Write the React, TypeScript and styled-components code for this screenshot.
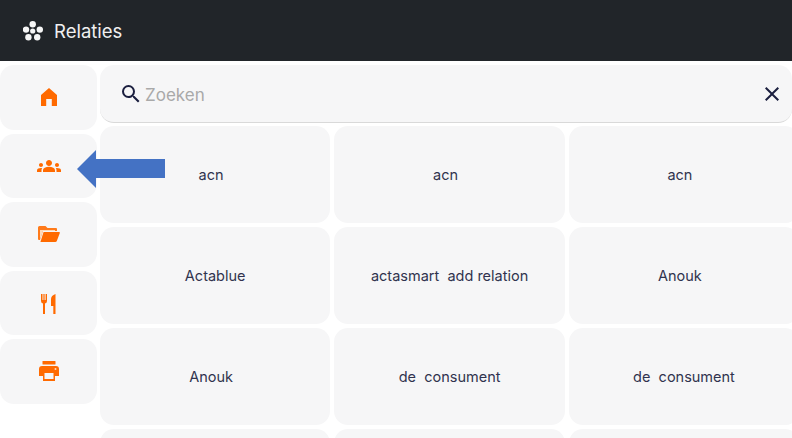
import * as React from 'react';
import styled, { createGlobalStyle } from 'styled-components';
import { MdClose, MdGroups, MdSearch } from 'react-icons/md';

const GlobalStyle = createGlobalStyle`
  html, body {
    margin: 0;
    height: 100%;
    overflow: hidden;
    background: #fff;
  }
  body {
    font-family: Inter, "Open Sans", "Liberation Sans", sans-serif;
  }
`;

const Page = styled.div`
  position: relative;
  width: 792px;
  height: 438px;
  overflow: hidden;
`;

const Header = styled.header`
  display: flex;
  align-items: center;
  gap: 11px;
  height: 61px;
  padding-left: 23px;
  background: #212529;
  color: #f0f0f0;
`;

const Title = styled.h1`
  margin: 0;
  font-size: 18.5px;
  font-weight: 400;
`;

const Body = styled.div`
  display: flex;
  gap: 3px;
  padding-top: 4px;
`;

const Sidebar = styled.nav`
  display: flex;
  flex-direction: column;
  gap: 4px;
  width: 97px;
  flex: none;
`;

const NavButton = styled.button`
  display: flex;
  align-items: center;
  justify-content: center;
  height: 64.5px;
  padding: 0;
  border: none;
  border-radius: 14px;
  background: #f6f6f7;
  color: #ff6a00;
`;

const Content = styled.main`
  display: flex;
  flex-direction: column;
  gap: 3px;
  width: 700px;
  flex: none;
`;

const SearchBar = styled.div`
  display: flex;
  align-items: center;
  height: 58px;
  width: 692px;
  padding: 0 8px 0 19px;
  box-sizing: border-box;
  border-bottom: 1px solid #d9d9d9;
  border-radius: 14px;
  background: #f6f6f7;
  color: #1b1f3f;
`;

const SearchText = styled.span`
  flex: 1;
  margin-left: 2px;
  padding-top: 3px;
  color: #a9a9a9;
  font-size: 17px;
`;

const Grid = styled.div`
  display: grid;
  grid-template-columns: repeat(3, 230.4px);
  grid-auto-rows: 97px;
  gap: 4px;
`;

const Tile = styled.div`
  display: flex;
  align-items: center;
  justify-content: center;
  border-radius: 14px;
  background: #f6f6f7;
  color: #30334e;
  font-size: 14.5px;
  white-space: pre;
`;

const Arrow = styled.svg`
  position: absolute;
  left: 77px;
  top: 150px;
`;

const tiles = [
  'acn  ',
  'acn  ',
  'acn  ',
  'Actablue',
  'actasmart  add relation',
  'Anouk  ',
  'Anouk  ',
  'de  consument',
  'de  consument',
  '',
  '',
  '',
];

const Logo = () => (
  <svg width="20" height="20" viewBox="0 0 20 20" fill="#f6f6f6">
    <circle cx="9.7" cy="3.2" r="3.2" />
    <circle cx="3" cy="8.6" r="3.2" />
    <circle cx="16.8" cy="8.6" r="3.2" />
    <circle cx="5.4" cy="16.2" r="3.2" />
    <circle cx="14.2" cy="16.2" r="3.2" />
    <circle cx="9.7" cy="10" r="2.6" />
  </svg>
);

const HomeIcon = () => (
  <svg width="16" height="18" viewBox="0 0 16 18" fill="currentColor">
    <path d="M8 0 L16 7 V18 H10.8 V11 H5.2 V18 H0 V7 Z" />
  </svg>
);

const FolderIcon = () => (
  <svg width="22" height="18" viewBox="0 0 22 18">
    <path d="M1.5 1 H7.5 L9.5 3 H18 Q19 3 19 4 V6 H5 L2 15 H1 Q0 15 0 14 V2.5 Q0 1 1.5 1 Z" fill="#ff7a1a" />
    <path d="M2 5 H17 V6 H5 L2.3 14 H2 Z" fill="#ffd9b8" />
    <path d="M5.6 7 H21.2 Q22 7 21.8 8 L18.8 16 Q18.4 17 17.4 17 H2.4 Z" fill="currentColor" />
  </svg>
);

const CutleryIcon = () => (
  <svg width="15" height="22" viewBox="0 -2 15 22" fill="currentColor">
    <path d="M0 0 H1.5 V6 H2.4 V0 H3.6 V6 H4.6 V0 H6 V7 Q6 9 4 9.6 V20 H2 V9.6 Q0 9 0 7 Z" />
    <path d="M14.5 0 V20 H12.3 V12 H10 V5 Q10 1.5 14.5 0 Z" />
  </svg>
);

const PrinterIcon = () => (
  <svg width="20" height="20" viewBox="0 0 20 20" fill="currentColor">
    <rect x="3.5" y="0" width="13" height="3.5" rx="0.6" />
    <path d="M3 5 H17 Q20 5 20 8 V15 H16 V20 H4 V15 H0 V8 Q0 5 3 5 Z" />
    <rect x="5.5" y="12" width="9" height="6" fill="#f5f5f6" />
    <circle cx="16.5" cy="8" r="1" fill="#ffd9b8" />
  </svg>
);

export default function App() {
  return (
    <Page>
      <GlobalStyle />
      <Header>
        <Logo />
        <Title>Relaties</Title>
      </Header>
      <Body>
        <Sidebar>
          <NavButton>
            <HomeIcon />
          </NavButton>
          <NavButton>
            <MdGroups size={24} />
          </NavButton>
          <NavButton>
            <FolderIcon />
          </NavButton>
          <NavButton>
            <CutleryIcon />
          </NavButton>
          <NavButton>
            <PrinterIcon />
          </NavButton>
        </Sidebar>
        <Content>
          <SearchBar>
            <MdSearch size={24} />
            <SearchText>Zoeken</SearchText>
            <MdClose size={24} />
          </SearchBar>
          <Grid>
            {tiles.map((label, index) => (
              <Tile key={index}>{label}</Tile>
            ))}
          </Grid>
        </Content>
      </Body>
      <Arrow width="88" height="38" viewBox="0 0 88 38">
        <polygon points="0,19 19,0 19,9 88,9 88,28 19,28 19,38" fill="#4472c4" />
      </Arrow>
    </Page>
  );
}
